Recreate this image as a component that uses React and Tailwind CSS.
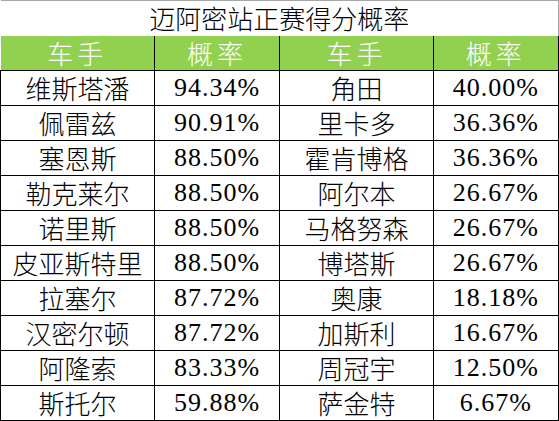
const rows = [
  ["维斯塔潘", "94.34%", "角田", "40.00%"],
  ["佩雷兹", "90.91%", "里卡多", "36.36%"],
  ["塞恩斯", "88.50%", "霍肯博格", "36.36%"],
  ["勒克莱尔", "88.50%", "阿尔本", "26.67%"],
  ["诺里斯", "88.50%", "马格努森", "26.67%"],
  ["皮亚斯特里", "88.50%", "博塔斯", "26.67%"],
  ["拉塞尔", "87.72%", "奥康", "18.18%"],
  ["汉密尔顿", "87.72%", "加斯利", "16.67%"],
  ["阿隆索", "83.33%", "周冠宇", "12.50%"],
  ["斯托尔", "59.88%", "萨金特", "6.67%"],
];

const cjk = "font-['Noto_Sans_CJK_SC',sans-serif] font-light text-[26px] leading-[30px]";
const num = "font-['Liberation_Serif',serif] text-[26px] tracking-[1px] leading-[30px]";

export default function App() {
  return (
    <div className="w-[559px] h-[421px] bg-white overflow-hidden">
      <table className="table-fixed border-collapse w-[558px]">
        <colgroup>
          <col className="w-[154px]" />
          <col className="w-[125px]" />
          <col className="w-[154px]" />
          <col className="w-[125px]" />
        </colgroup>
        <thead>
          <tr className="h-[35px]">
            <th
              colSpan={4}
              className="font-['Noto_Sans_CJK_SC',sans-serif] font-light text-[26px] leading-[34px] text-black text-center border-t border-r border-[#a6a6a6] p-0"
            >
              迈阿密站正赛得分概率
            </th>
          </tr>
          <tr className="h-[35px] bg-[#92d050]">
            {["车手", "概率", "车手", "概率"].map((h, i) => (
              <th
                key={i}
                className={`${cjk} text-white text-center tracking-[4px] p-0 border-b border-black ${i > 0 ? "border-l" : ""} ${i === 3 ? "border-r-2" : ""}`}
              >
                {h}
              </th>
            ))}
          </tr>
        </thead>
        <tbody>
          {rows.map((r, i) => (
            <tr key={i} className="h-[35px]">
              <td className={`${cjk} text-center text-black border border-black p-0`}>{r[0]}</td>
              <td className={`${num} text-center text-black border border-black p-0`}>{r[1]}</td>
              <td className={`${cjk} text-center text-black border border-black p-0`}>{r[2]}</td>
              <td className={`${num} text-center text-black border border-black border-r-2 p-0`}>{r[3]}</td>
            </tr>
          ))}
        </tbody>
      </table>
    </div>
  );
}
